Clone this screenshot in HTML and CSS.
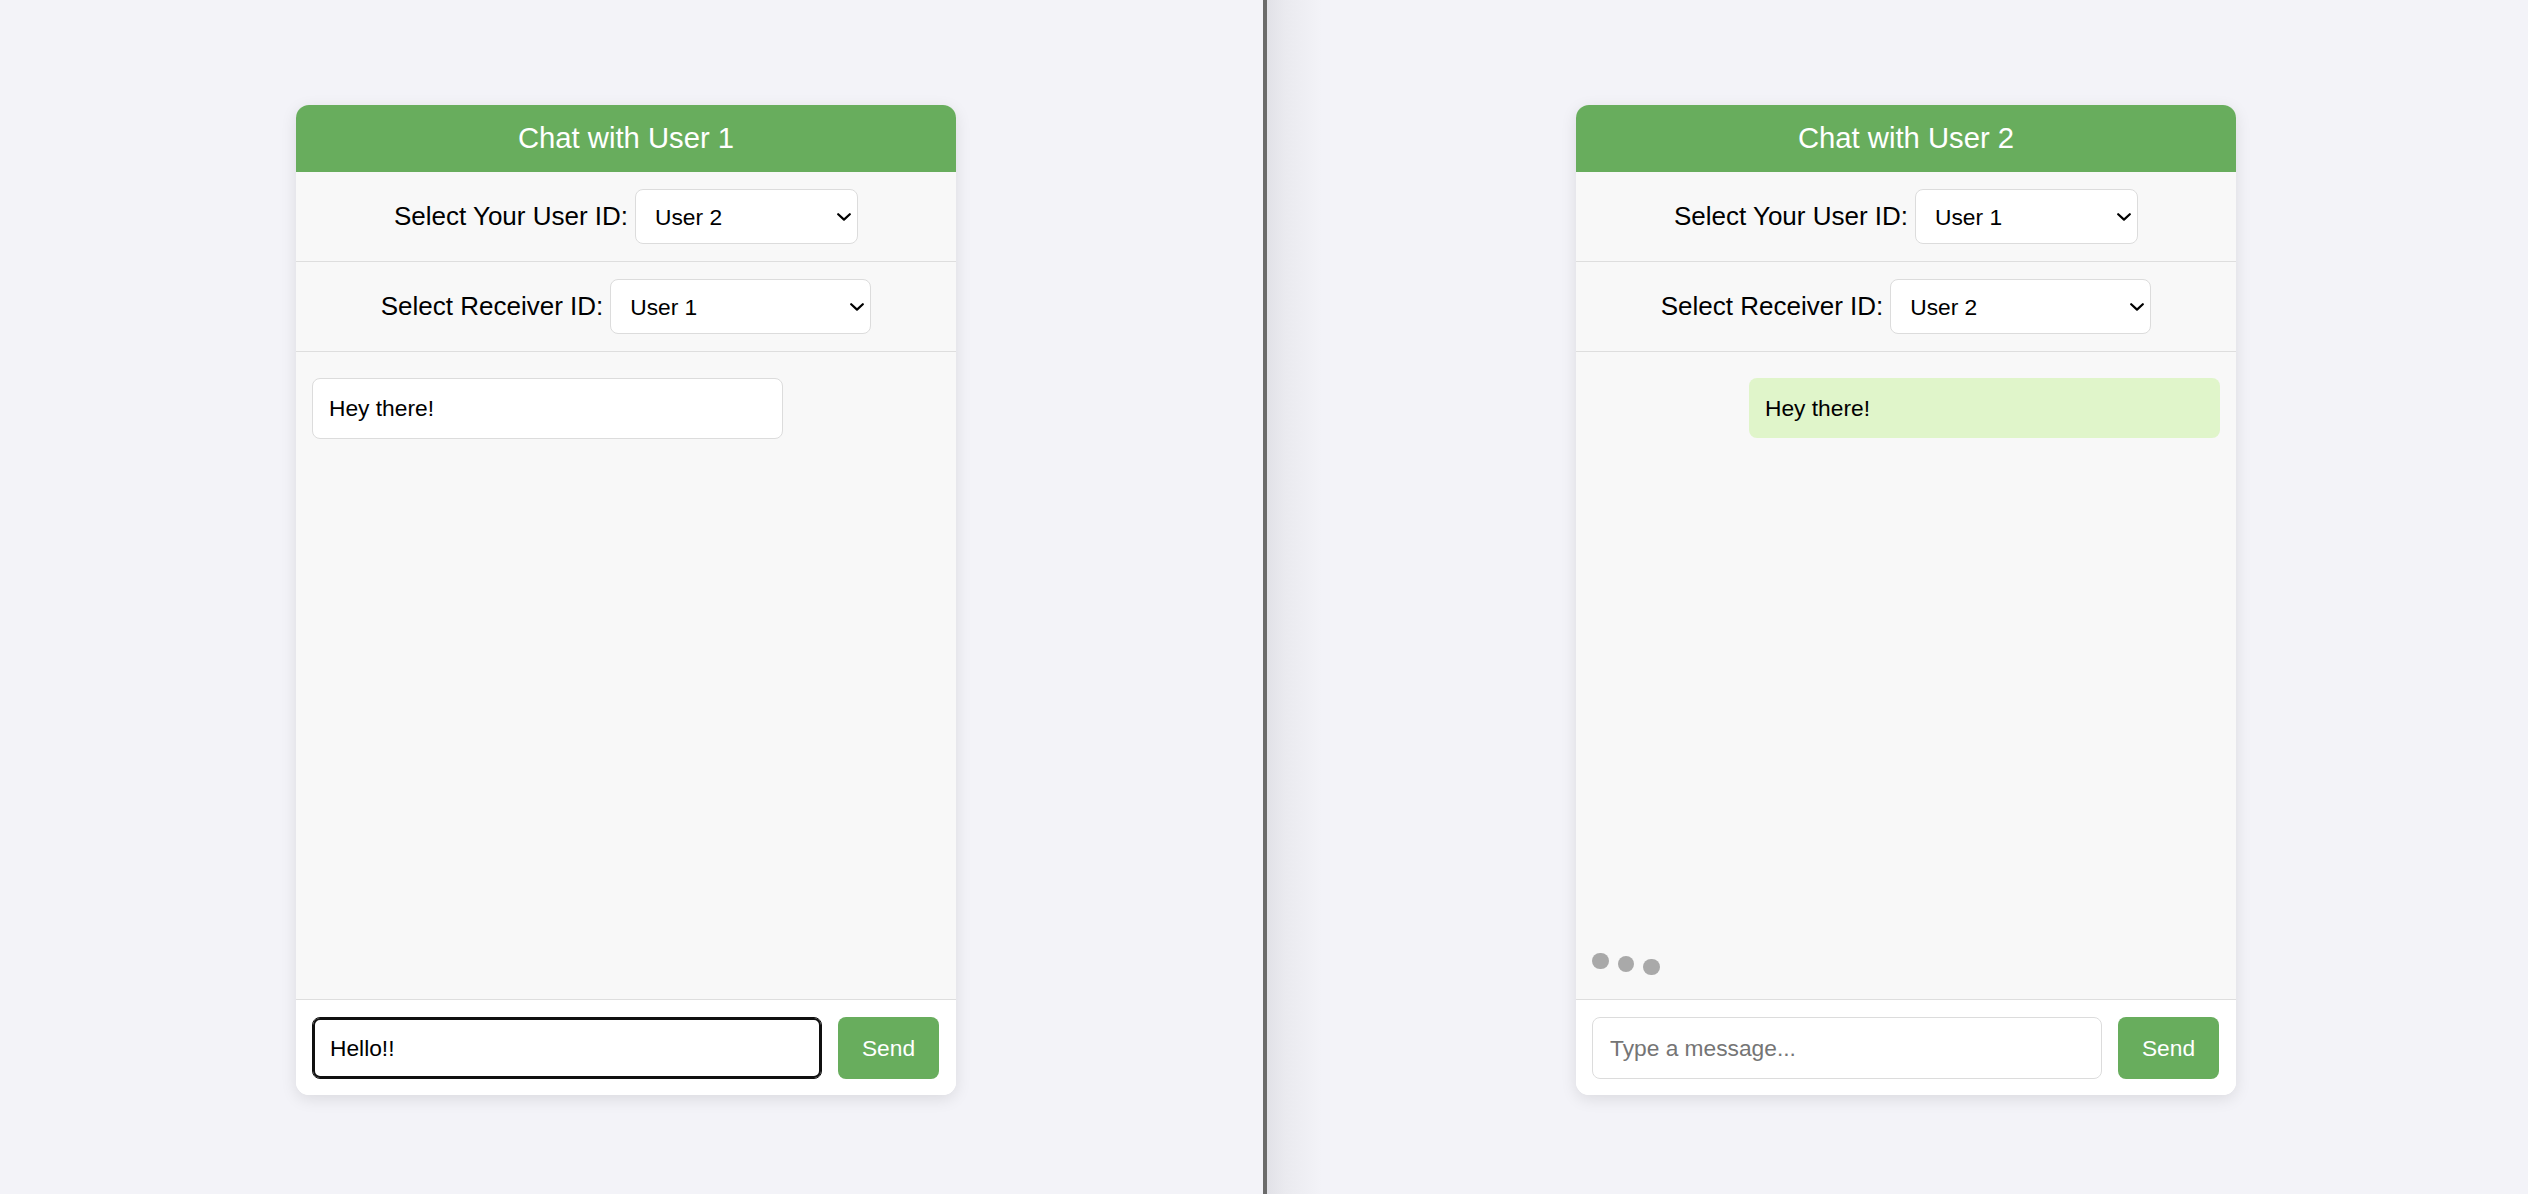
FILE: index.html
```html
<!DOCTYPE html>
<html lang="en">
<head>
<meta charset="utf-8">
<title>Chat</title>
<link rel="stylesheet" href="styles.css">
</head>
<body>
<div class="screen">
  <div class="pane pane-left">
    <div class="card">
      <div class="card-header">Chat with User 1</div>
      <div class="select-row">
        <label class="select-label" for="a-self">Select Your User ID:</label>
        <span class="select-wrap select-self">
          <select id="a-self" class="id-select">
            <option>User 1</option>
            <option selected>User 2</option>
          </select>
          <svg class="chevron" viewBox="0 0 14 8" aria-hidden="true"><polyline points="1.2,1.2 7,6.6 12.8,1.2" /></svg>
        </span>
      </div>
      <div class="select-row">
        <label class="select-label" for="a-recv">Select Receiver ID:</label>
        <span class="select-wrap select-receiver">
          <select id="a-recv" class="id-select">
            <option selected>User 1</option>
            <option>User 2</option>
          </select>
          <svg class="chevron" viewBox="0 0 14 8" aria-hidden="true"><polyline points="1.2,1.2 7,6.6 12.8,1.2" /></svg>
        </span>
      </div>
      <div class="messages">
        <div class="bubble bubble-received">Hey there!</div>
      </div>
      <div class="composer">
        <input class="msg-input is-focused" type="text" value="Hello!!" placeholder="Type a message...">
        <button class="send-btn" type="button">Send</button>
      </div>
    </div>
  </div>
  <div class="divider"></div>
  <div class="pane pane-right">
    <div class="card">
      <div class="card-header">Chat with User 2</div>
      <div class="select-row">
        <label class="select-label" for="b-self">Select Your User ID:</label>
        <span class="select-wrap select-self">
          <select id="b-self" class="id-select">
            <option selected>User 1</option>
            <option>User 2</option>
          </select>
          <svg class="chevron" viewBox="0 0 14 8" aria-hidden="true"><polyline points="1.2,1.2 7,6.6 12.8,1.2" /></svg>
        </span>
      </div>
      <div class="select-row">
        <label class="select-label" for="b-recv">Select Receiver ID:</label>
        <span class="select-wrap select-receiver">
          <select id="b-recv" class="id-select">
            <option>User 1</option>
            <option selected>User 2</option>
          </select>
          <svg class="chevron" viewBox="0 0 14 8" aria-hidden="true"><polyline points="1.2,1.2 7,6.6 12.8,1.2" /></svg>
        </span>
      </div>
      <div class="messages">
        <div class="bubble bubble-sent">Hey there!</div>
        <div class="typing">
          <span class="dot dot-1"></span>
          <span class="dot dot-2"></span>
          <span class="dot dot-3"></span>
        </div>
      </div>
      <div class="composer">
        <input class="msg-input" type="text" placeholder="Type a message...">
        <button class="send-btn" type="button">Send</button>
      </div>
    </div>
  </div>
</div>
</body>
</html>
```

FILE: styles.css
```css
* {
  box-sizing: border-box;
}

html,
body {
  margin: 0;
  height: 100%;
}

body {
  font-family: "Liberation Sans", Arial, sans-serif;
  background: #f3f3f8;
  color: #000;
  overflow: hidden;
}

.screen {
  display: flex;
  height: 1194px;
}

.pane {
  height: 100%;
  padding-top: 105px;
}

.pane-left {
  width: 1263px;
  flex: none;
  padding-left: 296px;
  background: #f3f3f8;
}

.divider {
  width: 4px;
  flex: none;
  background: #6b6b6b;
}

.pane-right {
  flex: 1;
  padding-left: 309px;
  background: linear-gradient(to right, #e1e1e7 0, #eaeaef 18px, #f3f3f8 55px);
}

.card {
  width: 660px;
  background: #fff;
  border-radius: 13px;
  box-shadow: 0 4px 16px rgba(0, 0, 0, 0.1);
  overflow: hidden;
  display: flex;
  flex-direction: column;
}

.card-header {
  height: 67px;
  background: #68ad5d;
  color: #fff;
  font-size: 29.25px;
  display: flex;
  align-items: center;
  justify-content: center;
}

.select-row {
  height: 90px;
  display: flex;
  align-items: center;
  justify-content: center;
  gap: 7px;
  background: #f8f8f8;
  border-bottom: 1px solid #dedede;
  font-size: 26px;
}

.select-label {
  color: #000;
}

.select-wrap {
  position: relative;
  display: block;
}

.id-select {
  appearance: none;
  -webkit-appearance: none;
  display: block;
  height: 55px;
  border: 1px solid #dcdcdc;
  border-radius: 8px;
  background: #fff;
  font-family: inherit;
  font-size: 22.75px;
  color: #000;
  padding: 0 40px 0 19px;
  outline: none;
}

.select-self .id-select {
  width: 223px;
}

.select-receiver .id-select {
  width: 261px;
}

.chevron {
  position: absolute;
  right: 7px;
  top: 50%;
  width: 14px;
  height: 8px;
  margin-top: -4px;
  pointer-events: none;
  fill: none;
  stroke: #000;
  stroke-width: 2.2;
  stroke-linecap: round;
  stroke-linejoin: round;
}

.messages {
  height: 647px;
  background: #f8f8f8;
  padding: 16px;
  display: flex;
  flex-direction: column;
}

.bubble {
  width: 75%;
  margin-top: 10px;
  padding: 16px;
  font-size: 22.75px;
  line-height: 27px;
  border-radius: 8px;
  color: #000;
}

.bubble-received {
  align-self: flex-start;
  background: #fff;
  border: 1px solid #dcdcdc;
}

.bubble-sent {
  align-self: flex-end;
  background: #e0f5ca;
  padding: 16.5px 16px;
}

.typing {
  margin-top: auto;
  margin-bottom: 8px;
  display: flex;
  gap: 9px;
}

.dot {
  width: 16.5px;
  height: 16.5px;
  border-radius: 50%;
  background: #a9a9a9;
}

.dot-1 {
  transform: translateY(-6px);
}

.dot-2 {
  transform: translateY(-3px);
}

.composer {
  display: flex;
  gap: 16px;
  padding: 17px 17px 16px 16px;
  border-top: 1px solid #dedede;
  background: #fff;
}

.msg-input {
  flex: 1;
  min-width: 0;
  height: 62px;
  border: 1px solid #dcdcdc;
  border-radius: 8px;
  padding: 0 17px;
  font-family: inherit;
  font-size: 22.75px;
  color: #000;
  background: #fff;
  outline: none;
}

.msg-input::placeholder {
  color: #757575;
}

.msg-input.is-focused {
  border-color: #101010;
  box-shadow: inset 0 0 0 2px #101010;
}

.send-btn {
  width: 101px;
  height: 62px;
  flex: none;
  border: none;
  border-radius: 8px;
  background: #68ad5d;
  color: #fff;
  font-family: inherit;
  font-size: 22.75px;
  padding: 0;
}
```
